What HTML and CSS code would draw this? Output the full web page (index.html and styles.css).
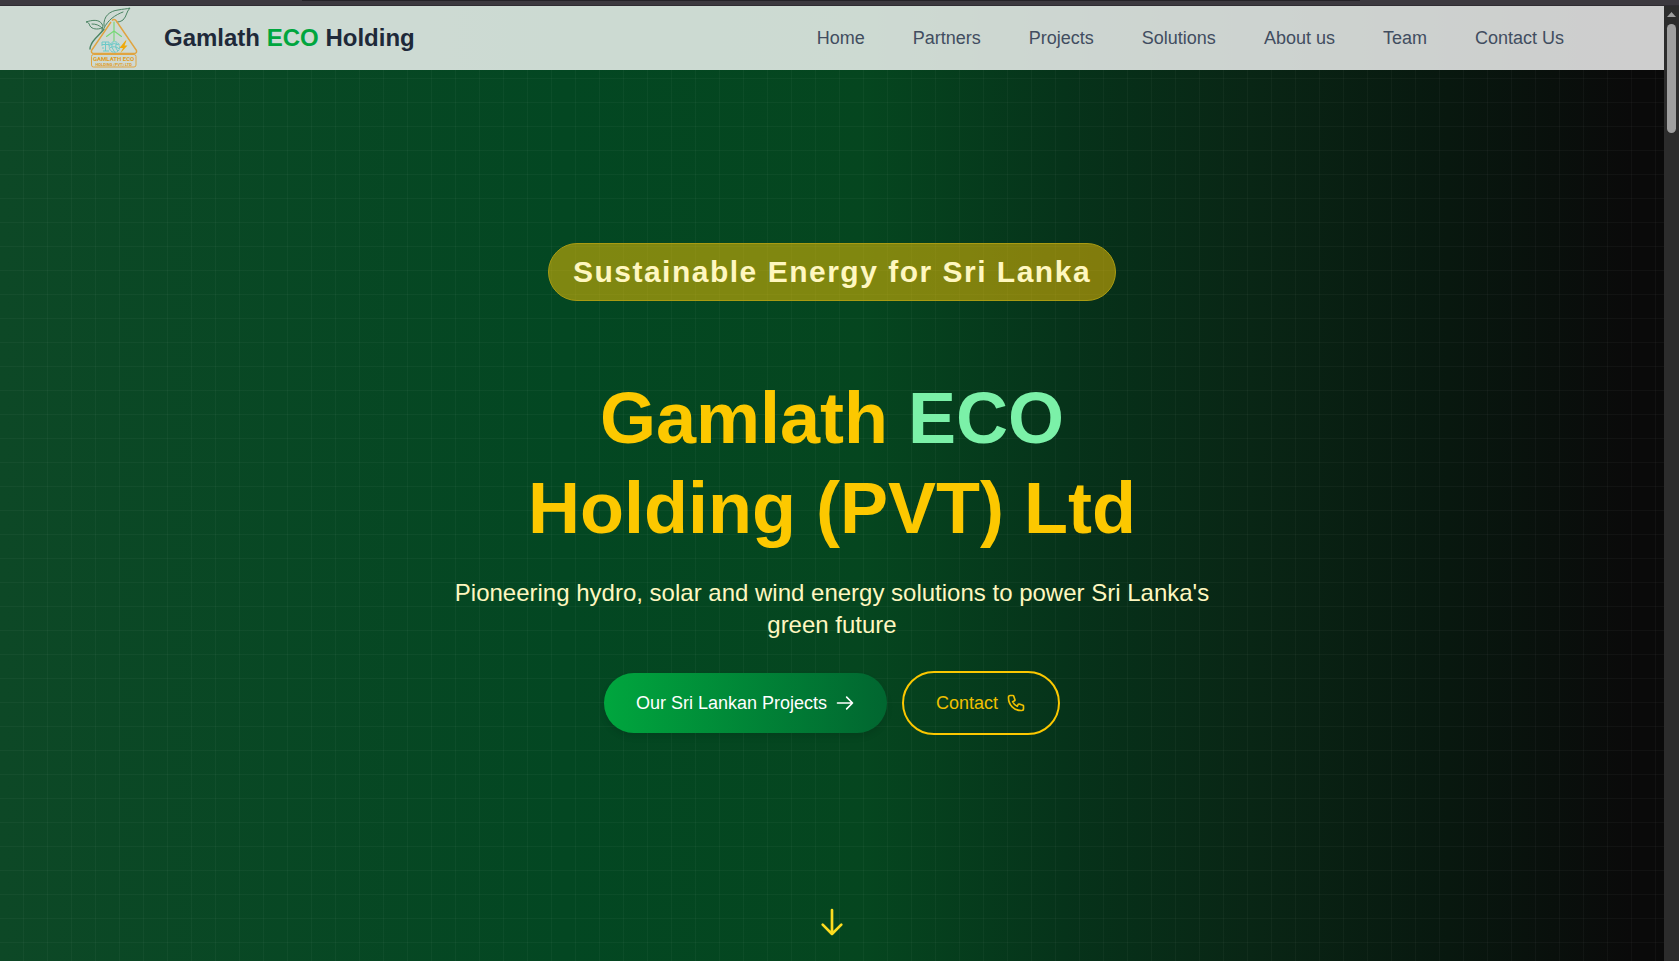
FILE: index.html
```html
<!DOCTYPE html>
<html lang="en">
<head>
<meta charset="utf-8">
<title>Gamlath ECO Holding</title>
<link rel="stylesheet" href="styles.css">
</head>
<body>
<div class="window-edge"><div class="window-edge-line"></div></div>
<div class="window">
  <div class="page">
    <header class="site-header">
      <a class="brand" href="#home">
        <svg class="brand-logo" viewBox="0 0 64 64" fill="none" aria-hidden="true">
          <g stroke="#4b8463" stroke-linecap="round" stroke-linejoin="round">
            <path stroke-width="1" d="M24 20C23 10 30 5 38 4C43 3 47 3 50 2C46 6 47 10 43 14C40 16 38 16 37 16M24 22C28 14 35 9 43 6"/>
            <path stroke-width="1" d="M22 22C17 24 12 23 10 20C9 17 8 16 6 16C12 14 19 13 22 18C23 20 23 21 22 24M22 22C19 19 16 18 12 18"/>
            <path stroke-width="1.4" d="M24 23C20 29 13 33 11 39C10 41 10 42 10 43"/>
          </g>
          <path stroke="#e0a440" stroke-width="1.4" stroke-linejoin="round" d="M32 14.500Q34 12.500 36 14.500L56.500 44.500Q57 47 55 47.500H13Q11 47 11.500 44.500L31 16"/>
          <path stroke="#74d874" stroke-width="1.100" stroke-linecap="round" d="M34 16V25L26.500 30.500M34 25L41.500 30.500M34 25V35"/>
          <g stroke="#6bc9c8" stroke-width="1">
            <path d="M22 36H29M22 38.500H29M22 36V40M25.500 36V45M29 36V40M23 45H29M23 41V43"/>
            <circle cx="34.500" cy="41" r="5.300" stroke-dasharray="2.500 .6"/>
            <path d="M30 39Q34 36 39 39M29.500 42Q34.500 39 39.500 43M32 37Q30.500 41 34.500 46M37 37Q34 41 38 45"/>
          </g>
          <path fill="#efa90b" d="M45.500 34.500L39.500 42H43L40.500 47L47.500 39.500H44.500L46.500 34.500Z"/>
          <rect x="11.500" y="48.500" width="44.500" height="12.500" rx="2" stroke="#e0a440"/>
          <text class="logo-name" x="33.600" y="55">GAMLATH ECO</text>
          <text class="logo-sub" x="33.600" y="60">HOLDING (PVT) LTD</text>
        </svg>
        <span>Gamlath <span class="brand-eco">ECO</span> Holding</span>
      </a>
      <nav class="site-nav" aria-label="Main">
        <a href="#home">Home</a>
        <a href="#partners">Partners</a>
        <a href="#projects">Projects</a>
        <a href="#solutions">Solutions</a>
        <a href="#about">About us</a>
        <a href="#team">Team</a>
        <a href="#contact">Contact Us</a>
      </nav>
    </header>
    <main class="hero" id="home">
      <p class="badge">Sustainable Energy for Sri Lanka</p>
      <h1 class="title">Gamlath <span class="title-eco">ECO</span><br>Holding (PVT) Ltd</h1>
      <p class="lead">Pioneering hydro, solar and wind energy solutions to power Sri Lanka's green future</p>
      <div class="actions">
        <a class="button button-primary" href="#projects">Our Sri Lankan Projects
          <svg class="icon" viewBox="0 0 24 24" aria-hidden="true"><path d="M14 5l7 7m0 0l-7 7m7-7H3"/></svg>
        </a>
        <a class="button button-outline" href="#contact">Contact
          <svg class="icon" viewBox="0 0 24 24" aria-hidden="true"><path d="M3 5a2 2 0 0 1 2-2h3.280a1 1 0 0 1 .948.684l1.498 4.493a1 1 0 0 1-.502 1.210l-2.257 1.130a11.042 11.042 0 0 0 5.516 5.516l1.130-2.257a1 1 0 0 1 1.210-.502l4.493 1.498a1 1 0 0 1 .684.949V19a2 2 0 0 1-2 2h-1C9.716 21 3 14.284 3 6V5z"/></svg>
        </a>
      </div>
      <a class="scroll-cue" href="#partners" aria-label="Scroll down">
        <svg class="icon icon-large" viewBox="0 0 24 24" aria-hidden="true"><path d="M19 14l-7 7m0 0l-7-7m7 7V3"/></svg>
      </a>
    </main>
  </div>
  <div class="scrollbar" aria-hidden="true">
    <svg class="scroll-arrow" viewBox="0 0 9 5"><path d="M0 5 4.500 0 9 5Z"/></svg>
    <div class="scroll-thumb"></div>
  </div>
</div>
</body>
</html>
```
FILE: styles.css
```css
* {
  box-sizing: border-box;
}

body {
  margin: 0;
  height: 100vh;
  display: flex;
  flex-direction: column;
  overflow: hidden;
  font-family: "Liberation Sans", Arial, sans-serif;
  background: #2c2c2c;
}

a {
  color: inherit;
  text-decoration: none;
}

.window-edge {
  flex: none;
  height: 6px;
  background: #3c393f;
  border-bottom: 1px solid #2f2c32;
}

.window-edge-line {
  height: 1px;
  margin: 0 19% 0 18%;
  background: #242227;
}

.window {
  flex: 1;
  display: flex;
  min-height: 0;
}

.page {
  flex: 1;
  display: flex;
  flex-direction: column;
  background: linear-gradient(to right, #0d4826 0%, #034722 34%, #05461f 52%, #06331a 64%, #092615 75%, #08180f 87%, #0a0a0a 98%);
}

.site-header {
  display: flex;
  align-items: center;
  justify-content: space-between;
  height: 64px;
  padding: 0 100px 0 80px;
  background: rgba(255, 255, 255, 0.8);
}

.brand {
  display: flex;
  align-items: center;
  gap: 20px;
  font-size: 24px;
  line-height: 32px;
  font-weight: 700;
  color: #1e2939;
}

.brand-logo {
  width: 64px;
  height: 64px;
}

.logo-name,
.logo-sub {
  fill: #e09a20;
  font-family: Roboto, "Liberation Sans", sans-serif;
  font-weight: 700;
  text-anchor: middle;
}

.logo-name {
  font-size: 6px;
}

.logo-sub {
  font-size: 4px;
}

.brand-eco {
  color: #00a63e;
}

.site-nav {
  display: flex;
  gap: 48px;
  font-size: 18px;
  line-height: 28px;
  color: #414d60;
}

.hero {
  position: relative;
  flex: 1;
  display: flex;
  flex-direction: column;
  align-items: center;
  justify-content: center;
  padding: 0 24px 54px;
  text-align: center;
  background-image:
    linear-gradient(to right, rgba(255, 255, 255, 0.03) 1px, transparent 1px),
    linear-gradient(to bottom, rgba(255, 255, 255, 0.03) 1px, transparent 1px);
  background-size: 24px 24px;
  background-position: -1px 8px;
}

.badge {
  margin: 0 0 72px;
  padding: 8px 24px;
  border: 1px solid #a99b12;
  border-radius: 29px;
  background: rgba(252, 200, 0, 0.5);
  color: #fff7c0;
  font-size: 30px;
  line-height: 40px;
  font-weight: 700;
  letter-spacing: 0.05em;
}

.title {
  margin: 0 0 24px;
  color: #fcc800;
  font-size: 72px;
  line-height: 90px;
  font-weight: 700;
}

.title-eco {
  color: #7bf1a8;
}

.lead {
  max-width: 768px;
  margin: 0 0 30px;
  color: #fff7c0;
  font-size: 24px;
  line-height: 32px;
}

.actions {
  display: flex;
  align-items: center;
  gap: 15px;
}

.button {
  display: flex;
  align-items: center;
  gap: 8px;
  padding: 16px 32px;
  border-radius: 32px;
  font-size: 18px;
  line-height: 28px;
}

.button-primary {
  color: #fff;
  background: linear-gradient(to right, #00a63e, #016630);
  box-shadow: 0 4px 6px rgba(0, 0, 0, 0.1);
}

.button-outline {
  border: 2px solid #fcc800;
  color: #f0c000;
}

.icon {
  width: 20px;
  height: 20px;
  fill: none;
  stroke: currentColor;
  stroke-width: 2;
  stroke-linecap: round;
  stroke-linejoin: round;
}

.scroll-cue {
  position: absolute;
  bottom: 23px;
  left: 50%;
  margin-left: -16px;
  color: #fddc20;
}

.icon-large {
  display: block;
  width: 32px;
  height: 32px;
}

.scrollbar {
  flex: none;
  width: 15px;
  display: flex;
  flex-direction: column;
  align-items: center;
  gap: 7px;
  padding-top: 6px;
  background: #2c2c2c;
}

.scroll-arrow {
  width: 9px;
  height: 5px;
  fill: #9f9f9f;
}

.scroll-thumb {
  width: 9px;
  height: 109px;
  border-radius: 5px;
  background: #9f9f9f;
}
```
